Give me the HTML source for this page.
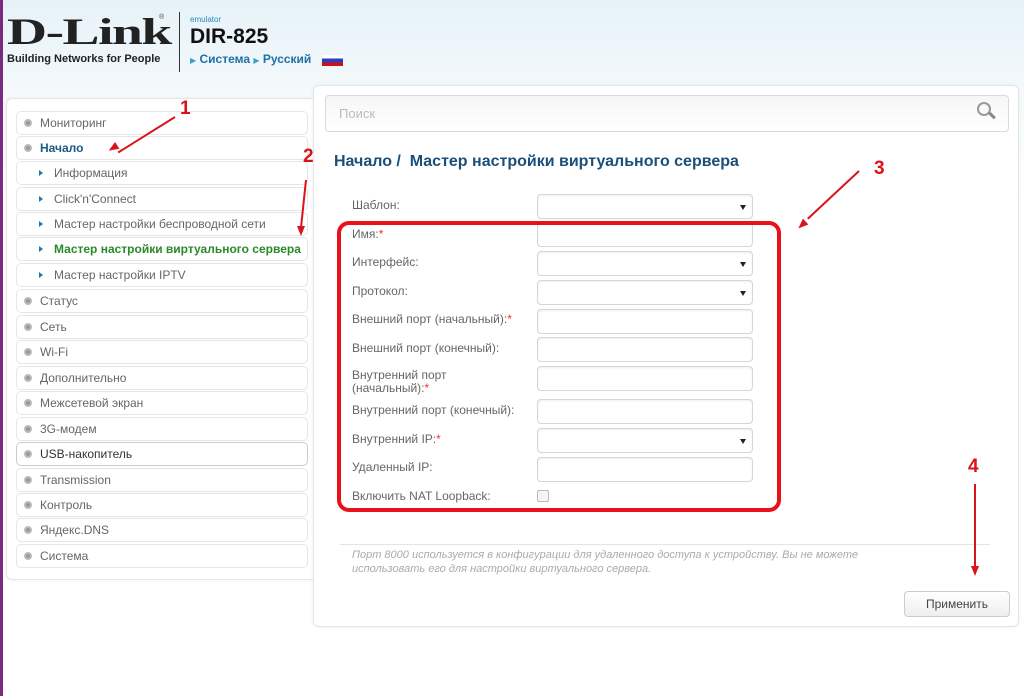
<!DOCTYPE html>
<html><head><meta charset="utf-8"><style>
body{margin:0;width:1024px;height:696px;overflow:hidden;position:relative;font-family:"Liberation Sans","DejaVu Sans",sans-serif;background:linear-gradient(#e6f2f8 0,#f4f9fb 90px,#fff 200px);}
.a{position:absolute}
.lb{position:absolute;left:0;top:0;width:3px;height:696px;background:#7a2b7f}
.panel{position:absolute;border:1px solid #e2e6e8;border-radius:6px;background:#fff;box-shadow:0 0 3px #e8ecee}
.it{position:absolute;left:16px;width:290px;height:22px;border:1px solid #e4e6e8;border-radius:5px;background:#fff;font-size:12px;color:#666;line-height:22px}
.it .ic{position:absolute;left:7px;top:7px;width:8px;height:8px;border-radius:50%;background:#999;box-sizing:border-box;border:2px solid #bbb}
.it span{position:absolute;left:23px}
.sub span{left:37px}
.sub .ar{position:absolute;left:22px;top:8px;width:0;height:0;border-left:4px solid #1e77b5;border-top:3px solid transparent;border-bottom:3px solid transparent}
.lab{position:absolute;left:352px;font-size:12px;color:#666}
.inp{position:absolute;left:537px;width:214px;height:23px;border:1px solid #d4d6d8;border-radius:4px;background:#fff;box-shadow:inset 0 1px 2px #eee}
.inp.s:after{content:"";position:absolute;right:6px;top:10px;border-top:5px solid #222;border-left:3px solid transparent;border-right:3px solid transparent}
.r{color:#e33}
.arrow{position:absolute;height:2px;background:#d8141a;transform-origin:0 50%}
.num{position:absolute;color:#d8141a;font-size:19px;font-weight:bold}
</style></head><body>
<div class="lb"></div>
<div class="a" style="left:7px;top:14px;font-family:'Liberation Serif',serif;font-weight:bold;font-size:37px;color:#222;letter-spacing:-1px;line-height:38px;transform:scaleX(1.5);transform-origin:0 0">D-Link</div>
<div class="a" style="left:159px;top:14px;font-size:7px;color:#444">®</div>
<div class="a" style="left:7px;top:53px;font-size:11px;font-weight:bold;color:#222">Building Networks for People</div>
<div class="a" style="left:179px;top:12px;width:1px;height:60px;background:#333"></div>
<div class="a" style="left:190px;top:15px;font-size:8px;color:#2a8ac0">emulator</div>
<div class="a" style="left:190px;top:25px;font-size:21px;font-weight:bold;color:#111">DIR-825</div>
<div class="a" style="left:190px;top:52px;font-size:12px;font-weight:bold;color:#1e6fa8;white-space:nowrap"><span style="color:#3aa0d0;font-size:8px">▶</span> Система <span style="color:#3aa0d0;font-size:8px">▶</span> Русский</div>
<div class="a" style="left:322px;top:55px;width:21px;height:11px;background:linear-gradient(#fff 0 33%,#2a3fc0 33% 66%,#d01010 66%)"></div>

<div class="panel" style="left:6px;top:98px;width:310px;height:480px"></div>
<div class="it" style="top:111px"><i class="ic"></i><span>Мониторинг</span></div>
<div class="it" style="top:136px"><i class="ic"></i><span style="color:#1b5a86;font-weight:bold">Начало</span></div>
<div class="it sub" style="top:161px"><i class="ar"></i><span>Информация</span></div>
<div class="it sub" style="top:187px"><i class="ar"></i><span>Click'n'Connect</span></div>
<div class="it sub" style="top:212px"><i class="ar"></i><span>Мастер настройки беспроводной сети</span></div>
<div class="it sub" style="top:237px"><i class="ar"></i><span style="color:#2a8a2a;font-weight:bold">Мастер настройки виртуального сервера</span></div>
<div class="it sub" style="top:263px"><i class="ar"></i><span>Мастер настройки IPTV</span></div>
<div class="it" style="top:289px"><i class="ic"></i><span>Статус</span></div>
<div class="it" style="top:315px"><i class="ic"></i><span>Сеть</span></div>
<div class="it" style="top:340px"><i class="ic"></i><span>Wi-Fi</span></div>
<div class="it" style="top:366px"><i class="ic"></i><span>Дополнительно</span></div>
<div class="it" style="top:391px"><i class="ic"></i><span>Межсетевой экран</span></div>
<div class="it" style="top:417px"><i class="ic"></i><span>3G-модем</span></div>
<div class="it" style="top:442px;border-color:#ccc"><i class="ic"></i><span style="color:#333">USB-накопитель</span></div>
<div class="it" style="top:468px"><i class="ic"></i><span>Transmission</span></div>
<div class="it" style="top:493px"><i class="ic"></i><span>Контроль</span></div>
<div class="it" style="top:518px"><i class="ic"></i><span>Яндекс.DNS</span></div>
<div class="it" style="top:544px"><i class="ic"></i><span>Система</span></div>

<div class="panel" style="left:313px;top:85px;width:704px;height:540px"></div>
<div class="a" style="left:325px;top:95px;width:682px;height:35px;border:1px solid #d8dadc;border-radius:4px;background:linear-gradient(#f6f6f6,#fff)"></div>
<div class="a" style="left:339px;top:106px;font-size:13px;color:#bbb">Поиск</div>
<div class="a" style="left:977px;top:102px;width:10px;height:10px;border:2px solid #999;border-radius:50%"></div>
<div class="a" style="left:988px;top:114px;width:8px;height:3px;background:#888;transform:rotate(45deg)"></div>
<div class="a" style="left:334px;top:153px;font-size:16px;font-weight:bold;color:#1b4f7a">Начало /&nbsp; Мастер настройки виртуального сервера</div>

<div class="lab" style="top:198px">Шаблон:</div><div class="inp s" style="top:194px"></div>
<div class="lab" style="top:227px">Имя:<span class="r">*</span></div><div class="inp" style="top:222px"></div>
<div class="lab" style="top:255px">Интерфейс:</div><div class="inp s" style="top:251px"></div>
<div class="lab" style="top:284px">Протокол:</div><div class="inp s" style="top:280px"></div>
<div class="lab" style="top:312px">Внешний порт (начальный):<span class="r">*</span></div><div class="inp" style="top:309px"></div>
<div class="lab" style="top:341px">Внешний порт (конечный):</div><div class="inp" style="top:337px"></div>
<div class="lab" style="top:369px;line-height:13px">Внутренний порт<br>(начальный):<span class="r">*</span></div><div class="inp" style="top:366px"></div>
<div class="lab" style="top:403px">Внутренний порт (конечный):</div><div class="inp" style="top:399px"></div>
<div class="lab" style="top:432px">Внутренний IP:<span class="r">*</span></div><div class="inp s" style="top:428px"></div>
<div class="lab" style="top:460px">Удаленный IP:</div><div class="inp" style="top:457px"></div>
<div class="lab" style="top:489px">Включить NAT Loopback:</div>
<div class="a" style="left:537px;top:490px;width:10px;height:10px;border:1px solid #bbb;border-radius:2px;background:#f4f4f4"></div>

<div class="a" style="left:337px;top:221px;width:436px;height:283px;border:4px solid #e8121a;border-radius:12px"></div>

<div class="a" style="left:340px;top:544px;width:650px;height:1px;background:#e4e4e4"></div>
<div class="a" style="left:352px;top:548px;font-size:11px;font-style:italic;color:#aaa;line-height:14px;width:575px">Порт 8000 используется в конфигурации для удаленного доступа к устройству. Вы не можете использовать его для настройки виртуального сервера.</div>
<div class="a" style="left:904px;top:591px;width:104px;height:24px;border:1px solid #ccc;border-radius:4px;background:linear-gradient(#fff,#eee);font-size:12px;color:#444;text-align:center;line-height:24px">Применить</div>

<div class="num" style="left:180px;top:98px">1</div>
<div class="num" style="left:303px;top:146px">2</div>
<div class="num" style="left:874px;top:158px">3</div>
<div class="num" style="left:968px;top:456px">4</div>
<div class="arrow" style="left:175px;top:116px;width:67px;transform:rotate(148deg)"></div>
<div class="a" style="left:108px;top:144px;border-right:10px solid #d8141a;border-top:4px solid transparent;border-bottom:4px solid transparent;transform:rotate(-32deg)"></div>
<div class="arrow" style="left:306px;top:179px;width:50px;transform:rotate(96deg)"></div>
<div class="a" style="left:297px;top:226px;border-top:10px solid #d8141a;border-left:4px solid transparent;border-right:4px solid transparent"></div>
<div class="arrow" style="left:859px;top:170px;width:70px;transform:rotate(137deg)"></div>
<div class="a" style="left:797px;top:221px;border-right:10px solid #d8141a;border-top:4px solid transparent;border-bottom:4px solid transparent;transform:rotate(-43deg)"></div>
<div class="a" style="left:974px;top:484px;width:2px;height:85px;background:#d8141a"></div>
<div class="a" style="left:971px;top:566px;border-top:10px solid #d8141a;border-left:4px solid transparent;border-right:4px solid transparent"></div>
</body></html>
